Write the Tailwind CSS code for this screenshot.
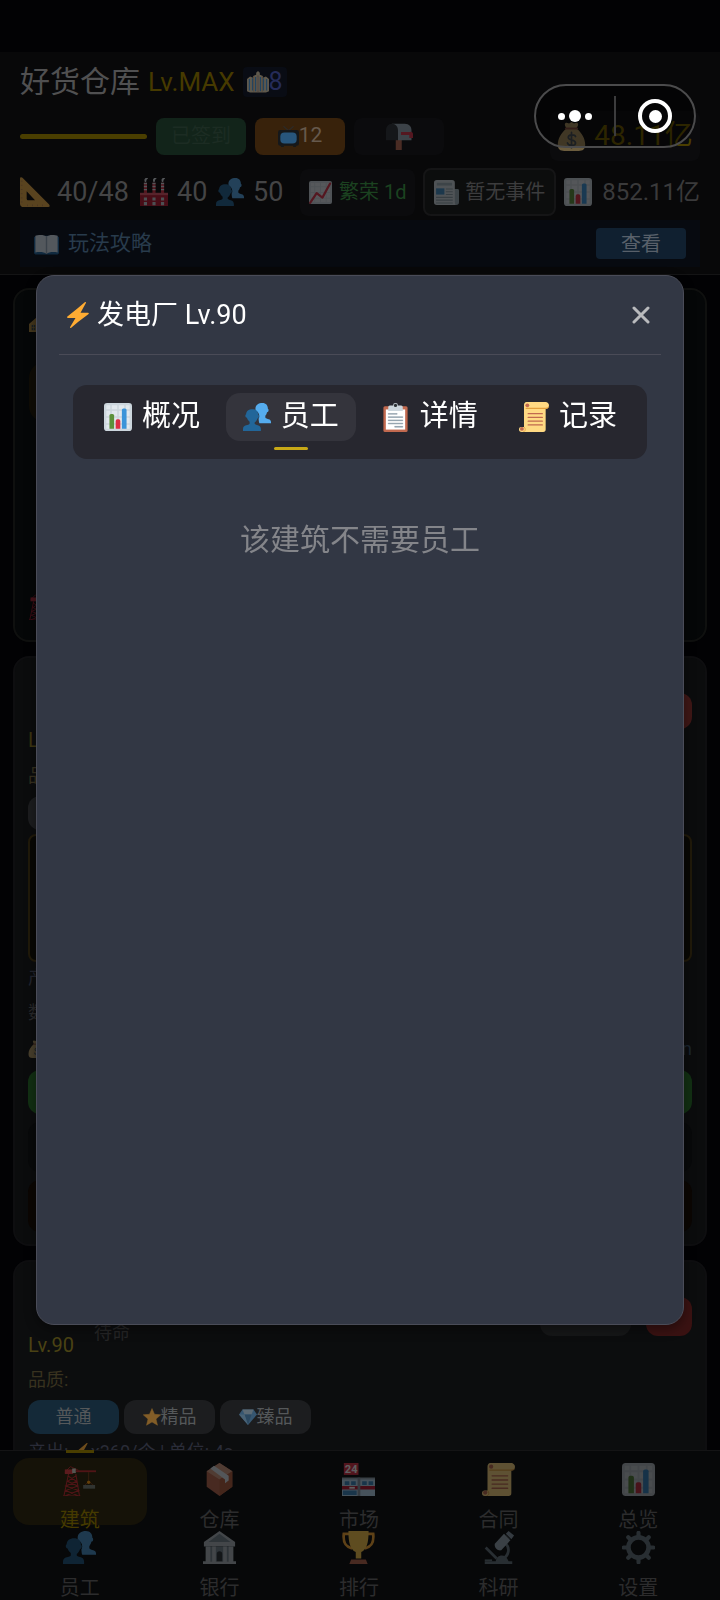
<!DOCTYPE html>
<html lang="zh-CN">
<head>
    <meta charset="UTF-8">
    <meta name="viewport" content="width=device-width, initial-scale=1.0">
    <title>好货仓库</title>
    <script src="https://cdn.jsdelivr.net/npm/@tailwindcss/browser@4"></script>
</head>
<body class="bg-[#020204] h-screen flex flex-col overflow-hidden font-['Roboto','Noto_Sans_CJK_SC',sans-serif] text-[#4a4a4b]">

    <!-- Icon set -->
    <svg class="hidden" xmlns="http://www.w3.org/2000/svg">
        <symbol id="i-chart" viewBox="0 0 36 36">
            <rect width="36" height="36" rx="4" fill="#ccd6dd"/>
            <path d="M3 3h5v5H3zM10 3h7v5h-7zM19 3h7v5h-7zM28 3h5v5h-5zM3 10h5v7H3zM10 10h7v7h-7zM19 10h7v7h-7zM28 10h5v7h-5zM3 19h5v7H3zM10 19h7v7h-7zM19 19h7v7h-7zM28 19h5v7h-5zM3 28h5v5H3zM10 28h7v5h-7zM19 28h7v5h-7zM28 28h5v5h-5z" fill="#e1e8ed"/>
            <path d="M13 33H7V16a2 2 0 0 1 2-2h2a2 2 0 0 1 2 2z" fill="#5c913b"/>
            <path d="M29 33h-6V9a2 2 0 0 1 2-2h2a2 2 0 0 1 2 2z" fill="#3b94d9"/>
            <path d="M21 33h-6V23a2 2 0 0 1 2-2h2a2 2 0 0 1 2 2z" fill="#dd2e44"/>
        </symbol>
        <symbol id="i-people" viewBox="0 0 36 36">
            <path d="M33 21c-1.500-.5-3.600-.8-4.300-2.200v-2.300c1.100-1.300 1.900-2.900 2.200-4.700 1-.1 2-1 2-2.500 0-.8-.2-1.600-.9-1.900C32 3 29.500 0 25 0c-5 0-9 2.500-9 7.500 0 1 .1 1.500.3 2 2.700 1.400 4.700 4 4.700 7.400 0 1.200-.5 2.500-1 3.500.4 1.500.1 3.500 1 5.500h15v-1.600C36 22.500 34.700 21.500 33 21z" fill="#55acee"/>
            <path d="M19 28.500c-1.900-.6-3.500-.9-4-1.900V25c1.700-1.300 3-3.200 3.500-5.200 1.100-.2 2-1.300 2-2.800 0-1-.3-1.700-1-2.100C19.400 10.200 16.500 8 12 8s-8 2.500-8 6.500C3.300 14.900 3 15.600 3 16.400c0 1.400.9 2.500 2 2.700.6 2 1.900 3.700 3.500 5v2.500c-.6 1.100-2.400 1.400-4.500 2-2.400.7-4 2-4 5V36h23v-2.400c0-3-1.600-4.300-4-5.100z" fill="#226699"/>
        </symbol>
        <symbol id="i-clip" viewBox="0 0 36 36">
            <rect x="3" y="4" width="30" height="32" rx="2" fill="#c1694f"/>
            <path d="M6 8h24v25H6z" fill="#fff"/>
            <path d="M25 3h-4a3 3 0 0 0-6 0h-4a2 2 0 0 0-2 2v5h18V5a2 2 0 0 0-2-2z" fill="#ccd6dd"/>
            <circle cx="18" cy="3" r="2" fill="#292f33"/>
            <path d="M9 13h11v1H9zM9 17h18v1H9zM9 21h18v1H9zM9 25h18v1H9zM17 29h10v1H17z" fill="#8899a6" stroke="#8899a6" stroke-width=".6"/>
        </symbol>
        <symbol id="i-scroll" viewBox="0 0 36 36">
            <path d="M32 0H9C7 0 6 2 6 4v26H3c-2 0-3 1-3 3s1 3 3 3h26c2 0 3-1 3-3V8h1c2 0 3-2 3-4s-2-4-4-4z" fill="#ffd983"/>
            <path d="M8 7h24c3 0 4-1.500 4-3 0 3-1 4.500-4 4.500H8z" fill="#e39f3d"/>
            <path d="M11 14h17M11 18.500h17M11 23h17M11 27.500h17" stroke="#c1694f" stroke-width="1.500" stroke-linecap="round"/>
            <circle cx="10" cy="4" r="2.300" fill="#c1694f"/><circle cx="3.500" cy="32.300" r="2.300" fill="#c1694f"/>
            <path d="M6 30c1 1 1.500 2 1.500 3S7 35.500 5 36" stroke="#e39f3d" fill="none"/>
        </symbol>
        <symbol id="i-zap" viewBox="0 0 36 36">
            <path d="M32.900 15.600a1 1 0 0 0-.9-.6H21.500L28.900 1.500a1 1 0 0 0-1.500-1.300L18 8.200 3.300 20.200A1 1 0 0 0 4 22h10.500L7.100 34.500a1 1 0 0 0 1.500 1.300L18 27.800l14.700-11.100a1 1 0 0 0 .2-1.100z" fill="#ffac33"/>
        </symbol>
        <symbol id="i-ruler" viewBox="0 0 36 36">
            <path fill-rule="evenodd" d="M0 2C0 0 2 0 3 1l32 32c1 1.500 1 3-1 3H4c-2 0-4-1-4-4zM8 17v9c0 1 1 2 2 2h8z" fill="#f0b048"/>
            <path d="M1 5h2M1 10h2M1 15h2M1 20h2M1 25h2M1 30h2M9 33v2M15 33v2M21 33v2M27 33v2" stroke="#c1894f"/>
        </symbol>
        <symbol id="i-factory" viewBox="0 0 36 36">
            <path d="M5 20V6h4v14zM16 20V6h4v14zM27 20V6h4v14z" fill="#dd2e44"/>
            <path d="M5 7h4M5 11h4M5 15h4M16 7h4M16 11h4M16 15h4M27 7h4M27 11h4M27 15h4" stroke="#e1e8ed" stroke-width="1.800"/>
            <path d="M7 4V2l2-2M18 4V2l2-2M29 4V2l2-2" stroke="#e1e8ed" stroke-width="2.500" stroke-linecap="round"/>
            <path d="M0 20h36v16H0z" fill="#be1931"/><path d="M0 19h36v3H0z" fill="#ea596e"/>
            <path d="M5 25h4v4H5zM16 25h4v4h-4zM27 25h4v4h-4zM5 31h4v4H5zM16 31h4v4h-4zM27 31h4v4h-4z" fill="#ccd6dd"/>
        </symbol>
        <symbol id="i-tv" viewBox="0 0 36 36">
            <path d="M18 8L10 1M18 8l8-7" stroke="#2b2b2b" stroke-width="2" stroke-linecap="round"/>
            <rect y="7" width="36" height="27" rx="4" fill="#15181b"/><path d="M5 34h5v2H5zM26 34h5v2h-5z" fill="#15181b"/>
            <rect x="4" y="11" width="28" height="19" rx="7" fill="#28567c"/>
        </symbol>
        <symbol id="i-mail" viewBox="0 0 36 36">
            <path d="M13 22h8v14h-8z" fill="#c1694f"/>
            <path d="M8 1h17c6 0 9 4 9 9v13H16z" fill="#99aab5"/>
            <path d="M0 10c0-5 3-9 8-9s8 4 8 9v13H0z" fill="#292f33"/>
            <path d="M20 12h12a3 3 0 0 1 4 3v5h-5v-4H20z" fill="#dd2e44"/>
        </symbol>
        <symbol id="i-bag" viewBox="0 0 36 36">
            <path d="M12 8C9 4 9 1 12 1l3 1 3-2 3 2 3-1c3 0 3 3 0 7 7 5 11 13 11 20 0 6-3 8-8 8H9c-5 0-8-2-8-8C1 21 5 13 12 8z" fill="#fdd888"/>
            <path d="M11 8h14" stroke="#bf6952" stroke-width="2.500" stroke-linecap="round"/>
            <path d="M23 18c-1-3-9-3-9 1 0 5 9 2 9 7 0 4-9 4-10 0M18 13v19" stroke="#67757f" stroke-width="2.200" fill="none" stroke-linecap="round"/>
        </symbol>
        <symbol id="i-up" viewBox="0 0 36 36">
            <rect width="36" height="36" rx="3" fill="#ccd6dd"/>
            <path d="M3 3h30v30H3z" fill="#e1e8ed"/>
            <path d="M9 2v32M18 2v32M27 2v32M2 9h32M2 18h32M2 27h32" stroke="#ccd6dd" stroke-width="1.500"/>
            <path d="M2 34l10-15 9 7L33 4" stroke="#dd2e44" stroke-width="3.500" fill="none" stroke-linecap="round" stroke-linejoin="round"/>
        </symbol>
        <symbol id="i-news" viewBox="0 0 36 36">
            <path d="M26 13h8a2 2 0 0 1 2 2v17a4 4 0 0 1-8 0z" fill="#99aab5"/>
            <path d="M4 0h22a4 4 0 0 1 4 4v28c0 2 1 4 2 4H4a4 4 0 0 1-4-4V4a4 4 0 0 1 4-4z" fill="#ccd6dd"/>
            <path d="M4 4h22v4H4z" fill="#99aab5"/><path d="M3 12h12v9H3z" fill="#3b88c3"/>
            <path d="M17 13h10M17 17h10M17 21h10M3 25h24M3 29h24M3 33h24" stroke="#8899a6" stroke-width="1.500"/>
        </symbol>
        <symbol id="i-book" viewBox="0 0 36 36">
            <path d="M0 9l3-2h30l3 2v23l-2 2H2l-2-2z" fill="#226699"/>
            <path d="M18 8c-3-3-12-3-16-1v24c5-1 13-1 16 2 3-3 11-3 16-2V7C30 5 21 5 18 8z" fill="#e1e8ed"/>
            <path d="M18 8v25" stroke="#99aab5" stroke-width="2"/>
        </symbol>
        <symbol id="i-city" viewBox="0 0 36 36">
            <path d="M0 13l5-4 5 2V8l5-2V3l3-3 3 3v3l5 2v3l5-2 5 4v20l-5 2H5l-5-2z" fill="#ffe8b6"/>
            <path d="M4 13v19M9 12v20M14 10v23M22 10v23M27 12v20M32 13v19" stroke="#55acee" stroke-width="2"/>
            <path d="M17 8h2v26h-2zM11 9v25M25 9v25" stroke="#c1895b" stroke-width=".8" fill="#fff"/>
        </symbol>
        <symbol id="i-star" viewBox="0 0 36 36">
            <path d="M18 1l5 11.500 12.500 1.200-9.500 8.300 3 12.500-11-6.700-11 6.700 3-12.500L.5 13.700 13 12.500z" fill="#ffac33" stroke="#ffac33" stroke-linejoin="round"/>
        </symbol>
        <symbol id="i-gem" viewBox="0 0 36 36">
            <path d="M7 3h22l7 10-18 21L0 13z" fill="#5dadec"/>
            <path d="M7 3h22l-4 10H11z" fill="#bdddf4"/><path d="M11 13h14l-7 21z" fill="#4289c1"/><path d="M0 13h11l7 21z" fill="#8ccaf7"/>
        </symbol>
        <symbol id="i-crane" viewBox="0 0 36 36">
            <path d="M2 10l6-6 9 4" stroke="#be1931" stroke-width="1" fill="none"/>
            <path d="M2 7h9v5H2z" fill="#dd2e44"/><path d="M10 6h4v5h-4z" fill="#ccd6dd"/>
            <path d="M6 12L1 36M14 12l4 24M5 14l10 6-12 5 14 5-15 6M14 14l-9 6 11 5-13 5 14 6M0 36h19" stroke="#be1931" stroke-width="1.200" fill="none"/>
            <path d="M14 9h22" stroke="#be1931" stroke-width="2"/><path d="M28 10v9M28 20l-5 5M28 20l6 5" stroke="#8a3a20" stroke-width=".8"/>
            <circle cx="28" cy="21" r="1.800" fill="#f4900c"/><path d="M22 24h13v4H22z" fill="#66757f"/>
        </symbol>
        <symbol id="i-box" viewBox="0 0 36 36">
            <path d="M18 0l14 9v17L18 36 4 26V9z" fill="#c1694f"/>
            <path d="M18 0l14 9-14 9L4 9z" fill="#d99e82"/><path d="M18 18l14-9v17L18 36z" fill="#b5603f"/>
            <path d="M12 3l-4 3 16 12v4l4-3v-5z" fill="#e1e8ed"/>
        </symbol>
        <symbol id="i-shop" viewBox="0 0 36 36">
            <path d="M2 0h16v13H2z" fill="#dd2e44"/>
            <path d="M0 16h36v20H0z" fill="#bdddf4"/><path d="M0 16h36v2H0z" fill="#99aab5"/>
            <path d="M0 25h36v4H0z" fill="#be1931"/><path d="M3 20h5v4H3zM10 20h5v4h-5zM22 20h5v4h-5zM29 20h5v4h-5zM1 30h15v5H1z" fill="#3b88c3"/>
            <path d="M8 27h6" stroke="#fff" stroke-width="2"/><path d="M17 16h3v20h-3z" fill="#8899a6"/>
            <text x="10" y="11" font-size="12" font-weight="700" text-anchor="middle" fill="#fff">24</text>
        </symbol>
        <symbol id="i-bank" viewBox="0 0 36 36">
            <path d="M18 0l17 12v5H1v-5z" fill="#ccd6dd"/><path d="M18 3l12 9H6z" fill="#8899a6"/>
            <path d="M3 17h30v16H3z" fill="#8899a6"/>
            <path d="M3 17h5v16H3zM10 17h4v16h-4zM22 17h4v16h-4zM28 17h5v16h-5zM0 33h36v3H0z" fill="#ccd6dd"/>
            <path d="M15 33v-8a3 3 0 0 1 6 0v8z" fill="#31373d"/>
        </symbol>
        <symbol id="i-cup" viewBox="0 0 36 36">
            <path d="M8 3H2c-1 9 1 14 9 16M28 3h6c1 9-1 14-9 16" stroke="#ffac33" stroke-width="3" fill="none"/>
            <path d="M7 0h22c0 13-2 20-8 23v7h-6v-7C9 20 7 13 7 0z" fill="#ffcc4d"/>
            <path d="M10 31h16l2 5H8z" fill="#c1694f"/>
        </symbol>
        <symbol id="i-scope" viewBox="0 0 36 36">
            <path d="M26 14c5 5 3 13-3 16" stroke="#66757f" stroke-width="3" fill="none"/>
            <path d="M3 33h30v3H3zM15 33c1-8 11-9 14 0z" fill="#66757f"/><path d="M4 18l12 12" stroke="#66757f" stroke-width="3"/><path d="M3 31h8v2H3z" fill="#66757f"/>
            <path d="M24 3l7 7-10 11c-4 1-8-3-7-7z" fill="#99aab5"/><path d="M29 0l6 5-3 4-6-6z" fill="#8899a6"/>
            <path d="M26 4l5 5" stroke="#31373d" stroke-width="1.200"/>
        </symbol>
        <symbol id="i-gear" viewBox="0 0 36 36">
            <circle cx="18" cy="18" r="11" fill="none" stroke="#66757f" stroke-width="5"/>
            <path d="M18 2v4M18 30v4M2 18h4M30 18h4M6.800 6.800l2.700 2.700M26.500 26.500l2.700 2.700M6.800 29.200l2.700-2.700M26.500 9.500l2.700-2.700" stroke="#66757f" stroke-width="4.500" stroke-linecap="round"/>
        </symbol>
        <symbol id="i-house" viewBox="0 0 36 36">
            <path d="M0 18L18 2l18 16v18H0z" fill="#d9a64b"/><path d="M6 20h8v12H6z" fill="#3b5566"/><path d="M6 26h8M10 20v12" stroke="#d9a64b" stroke-width="1.500"/>
        </symbol>
    </svg>

    <!-- Header -->
    <header class="mt-[52px] h-[223px] shrink-0 border-b border-[#141415] bg-[#080809] px-5 pt-3">
        <div class="flex h-9 items-center">
            <h1 class="text-[30px] leading-9 text-[#505051]">好货仓库</h1>
            <span class="ml-2 text-[26px] leading-9 text-[#463a00]">Lv.MAX</span>
            <span class="ml-2 flex h-[30px] items-center rounded-sm bg-[#090c14] px-1 text-[25px] text-[#252b58]">
                <svg class="size-[22px] opacity-35"><use href="#i-city"/></svg>8
            </span>
        </div>
        <div class="mt-2 flex h-[56px] items-center gap-[9px]">
            <div class="h-[5px] w-[127px] rounded-full bg-[#4a3e00]"></div>
            <button class="h-[37px] w-[90px] rounded-lg bg-[#12241a] text-[20px] text-[#1c2c23]">已签到</button>
            <button class="flex h-[37px] w-[90px] items-center justify-center rounded-lg bg-[#38220b] text-[21px] text-[#66594c]">
                <svg class="size-[21px]"><use href="#i-tv"/></svg>12
            </button>
            <button aria-label="邮箱" class="flex h-[37px] w-[90px] items-center justify-center rounded-lg bg-[#0b0b0d]">
                <svg class="size-[27px] opacity-35"><use href="#i-mail"/></svg>
            </button>
            <div class="ml-auto flex h-[50px] w-[150px] items-center justify-center gap-2 rounded-lg bg-[#0b0b0d] text-[28px] text-[#4a3e00]">
                <svg class="size-[29px] opacity-40"><use href="#i-bag"/></svg>48.11亿
            </div>
        </div>
        <div class="mt-1 flex h-[48px] items-center text-[27px] text-[#444445]">
            <svg class="size-[30px] shrink-0 opacity-35"><use href="#i-ruler"/></svg>
            <span class="w-[83px] pl-[7px]">40/48</span>
            <svg class="ml-[7px] size-7 shrink-0 opacity-35"><use href="#i-factory"/></svg>
            <span class="w-12 pl-[9px]">40</span>
            <svg class="size-7 shrink-0 opacity-35"><use href="#i-people"/></svg>
            <span class="pl-[9px]">50</span>
            <button class="ml-auto flex h-[47px] w-[115px] shrink-0 items-center justify-center gap-[7px] rounded-lg bg-[#0b0b0d] text-[20px] text-[#1b4220]">
                <svg class="size-[23px] opacity-35"><use href="#i-up"/></svg>繁荣 1d
            </button>
            <button class="ml-2 flex h-[48px] w-[133px] shrink-0 items-center justify-center gap-[6px] rounded-lg border-2 border-[#151516] bg-[#0c0d0d] text-[20px] text-[#3c3c3d]">
                <svg class="size-[25px] opacity-35"><use href="#i-news"/></svg>暂无事件
            </button>
            <svg class="ml-2 size-7 shrink-0 opacity-35"><use href="#i-chart"/></svg>
            <span class="pl-[10px] text-[24px] text-[#3a3a3b]">852.11亿</span>
        </div>
        <div class="mt-1 flex h-[47px] items-center bg-[#070a10] pl-[14px] pr-[14px]">
            <svg class="size-[25px] opacity-35"><use href="#i-book"/></svg>
            <span class="ml-[9px] text-[21px] text-[#283b4c]">玩法攻略</span>
            <button class="ml-auto h-[31px] w-[90px] rounded-sm bg-[#102030] text-[20px] text-[#58606a]">查看</button>
        </div>
    </header>

    <!-- Building list -->
    <main class="flex min-h-0 flex-1 flex-col gap-[14px] overflow-hidden px-[13px] pt-[13px] text-[18px] leading-[18px]">
        <section class="flex h-[354px] shrink-0 flex-col items-start rounded-2xl border-2 border-[#0f100f] bg-[#050708] px-[14px] pb-5 pt-[26px]">
            <svg class="size-4 opacity-30"><use href="#i-house"/></svg>
            <div class="mt-[30px] h-[60px] w-16 rounded-2xl bg-[#0f0c05]"></div>
            <svg class="mt-auto size-7 opacity-30"><use href="#i-crane"/></svg>
        </section>

        <section class="shrink-0 rounded-2xl border-2 border-[#0e0e10] bg-[#0b0c0d] px-[13px] pb-3 pt-[35px]">
            <div class="flex justify-end"><button aria-label="拆除" class="h-9 w-[46px] rounded-xl bg-[#3f1716]"></button></div>
            <p class="mt-[2px] text-[20px] text-[#3d3511]">Lv.90</p>
            <p class="mt-[18px] text-[#36301f]">品质:</p>
            <button class="mt-[11px] block h-[34px] w-[91px] rounded-xl bg-[#1c1d1f]">普通</button>
            <div class="mt-1 h-[128px] rounded-lg border-2 border-[#211a0a] bg-[#080704]"></div>
            <p class="mt-[7px] text-[#23252f]">产出:</p>
            <p class="mt-[17px] text-[#29292b]">数量:</p>
            <div class="mt-[18px] flex justify-between text-[#1b2630]">
                <svg class="size-[18px] opacity-25"><use href="#i-bag"/></svg><span>/min</span>
            </div>
            <button aria-label="生产" class="mt-3 block h-[44px] w-full rounded-xl bg-[#123013]"></button>
            <button aria-label="升级" class="mt-2 block h-[50px] w-full rounded-xl bg-[#08090a]"></button>
            <button aria-label="出售" class="mt-2 block h-[52px] w-full rounded-xl bg-[#0b0603]"></button>
        </section>

        <section class="shrink-0 rounded-2xl border-2 border-[#0e0e10] bg-[#0c0d0e] px-[13px] pb-5 pt-[35px]">
            <div class="flex h-[39px] items-end">
                <span class="pl-[66px] leading-[6px] text-[#252526]">待命</span>
                <button aria-label="详情" class="ml-auto h-[39px] w-[91px] rounded-xl bg-[#161718]"></button>
                <button aria-label="拆除" class="ml-[15px] h-[39px] w-[46px] rounded-xl bg-[#3a1212]"></button>
            </div>
            <p class="text-[20px] text-[#4a4214]">Lv.90</p>
            <p class="mt-[17px] text-[#38321f]">品质:</p>
            <div class="mt-[11px] flex gap-[5px] text-[#55585a]">
                <button class="h-[34px] w-[91px] rounded-xl bg-[#142938]">普通</button>
                <button class="flex h-[34px] w-[91px] items-center justify-center rounded-xl bg-[#1c1d1f]"><svg class="size-[18px] opacity-45"><use href="#i-star"/></svg>精品</button>
                <button class="flex h-[34px] w-[91px] items-center justify-center rounded-xl bg-[#1c1d1f]"><svg class="size-[18px] opacity-40"><use href="#i-gem"/></svg>臻品</button>
            </div>
            <p class="mt-[9px] flex items-center text-[#2a2c38]">产出:&nbsp;<svg class="size-[18px] opacity-40"><use href="#i-zap"/></svg>x360/个 | 单位: 4s</p>
        </section>
    </main>

    <!-- Bottom navigation -->
    <nav class="grid h-[150px] shrink-0 grid-cols-5 content-start gap-y-px border-t border-[#141415] bg-[#070809] pl-[10px] pr-3 pt-[7px] text-[20px] text-[#2c2c2d]">
        <a href="#" class="relative mx-[3px] flex h-[67px] flex-col items-center rounded-2xl bg-[#151208] pt-[5px] leading-6 text-[#453a00]">
            <span class="absolute -top-2 h-[3px] w-7 bg-[#4a3e00]"></span>
            <svg class="size-[33px] shrink-0 opacity-35"><use href="#i-crane"/></svg><span class="mt-3">建筑</span>
        </a>
        <a href="#" class="flex h-[67px] flex-col items-center pt-[5px] leading-6"><svg class="size-[33px] shrink-0 opacity-35"><use href="#i-box"/></svg><span class="mt-3">仓库</span></a>
        <a href="#" class="flex h-[67px] flex-col items-center pt-[5px] leading-6"><svg class="size-[33px] shrink-0 opacity-35"><use href="#i-shop"/></svg><span class="mt-3">市场</span></a>
        <a href="#" class="flex h-[67px] flex-col items-center pt-[5px] leading-6"><svg class="size-[33px] shrink-0 opacity-35"><use href="#i-scroll"/></svg><span class="mt-3">合同</span></a>
        <a href="#" class="flex h-[67px] flex-col items-center pt-[5px] leading-6"><svg class="size-[33px] shrink-0 opacity-30"><use href="#i-chart"/></svg><span class="mt-3">总览</span></a>
        <a href="#" class="flex h-[67px] flex-col items-center pt-[5px] leading-6"><svg class="size-[33px] shrink-0 opacity-30"><use href="#i-people"/></svg><span class="mt-3">员工</span></a>
        <a href="#" class="flex h-[67px] flex-col items-center pt-[5px] leading-6"><svg class="size-[33px] shrink-0 opacity-30"><use href="#i-bank"/></svg><span class="mt-3">银行</span></a>
        <a href="#" class="flex h-[67px] flex-col items-center pt-[5px] leading-6"><svg class="size-[33px] shrink-0 opacity-35"><use href="#i-cup"/></svg><span class="mt-3">排行</span></a>
        <a href="#" class="flex h-[67px] flex-col items-center pt-[5px] leading-6"><svg class="size-[33px] shrink-0 opacity-35"><use href="#i-scope"/></svg><span class="mt-3">科研</span></a>
        <a href="#" class="flex h-[67px] flex-col items-center pt-[5px] leading-6"><svg class="size-[33px] shrink-0 opacity-35"><use href="#i-gear"/></svg><span class="mt-3">设置</span></a>
    </nav>

    <!-- Building dialog -->
    <div role="dialog" aria-labelledby="dialogTitle" class="fixed inset-x-9 bottom-[275px] top-[275px] rounded-[18px] border border-[#4a4c58] bg-[#323744] px-[22px] text-white shadow-[0_4px_12px_rgba(0,0,0,0.4)]">
        <div class="flex h-[79px] items-center border-b border-[#4a4b57] pl-[6px] pr-1">
            <svg class="size-[26px]"><use href="#i-zap"/></svg>
            <h2 id="dialogTitle" class="ml-[6px] pt-px text-[27px]">发电厂 Lv.90</h2>
            <button aria-label="关闭" class="ml-auto flex size-8 items-center justify-center text-[#b9babd]">
                <svg class="size-[18px]" viewBox="0 0 18 18"><path d="M2 2l14 14M16 2L2 16" stroke="currentColor" stroke-width="3" stroke-linecap="round"/></svg>
            </button>
        </div>
        <div role="tablist" class="mx-[14px] mt-[30px] flex h-[74px] justify-between rounded-[14px] bg-[#27272f] px-[14px] pt-2 text-[29px]">
            <button role="tab" class="flex h-12 w-[130px] items-center justify-center gap-[10px] rounded-[14px]"><svg class="size-7"><use href="#i-chart"/></svg>概况</button>
            <button role="tab" aria-selected="true" class="relative flex h-12 w-[130px] items-center justify-center gap-[10px] rounded-[14px] bg-[#34343c]">
                <svg class="size-7"><use href="#i-people"/></svg>员工
                <span class="absolute -bottom-[9px] left-1/2 h-[3px] w-[34px] -translate-x-1/2 rounded-full bg-[#c7a817]"></span>
            </button>
            <button role="tab" class="flex h-12 w-[130px] items-center justify-center gap-[10px] rounded-[14px]"><svg class="size-[29px]"><use href="#i-clip"/></svg>详情</button>
            <button role="tab" class="flex h-12 w-[130px] items-center justify-center gap-[10px] rounded-[14px]"><svg class="size-[30px]"><use href="#i-scroll"/></svg>记录</button>
        </div>
        <p class="mt-[61px] text-center text-[30px] leading-10 text-[#84858a]">该建筑不需要员工</p>
    </div>

    <!-- Mini program capsule -->
    <div class="fixed right-6 top-[84px] flex h-16 w-[162px] items-center rounded-full border-2 border-[#4b4b4c] bg-black/40">
        <button aria-label="更多" class="flex flex-1 items-center justify-center gap-1">
            <span class="size-[7px] rounded-full bg-white"></span>
            <span class="size-3 rounded-full bg-white"></span>
            <span class="size-[7px] rounded-full bg-white"></span>
        </button>
        <span class="h-10 w-[2px] bg-[#3c3c3d]"></span>
        <button aria-label="关闭小程序" class="flex flex-1 items-center justify-center">
            <span class="flex size-[34px] items-center justify-center rounded-full border-4 border-white"><span class="size-[13px] rounded-full bg-white"></span></span>
        </button>
    </div>
</body>
</html>
